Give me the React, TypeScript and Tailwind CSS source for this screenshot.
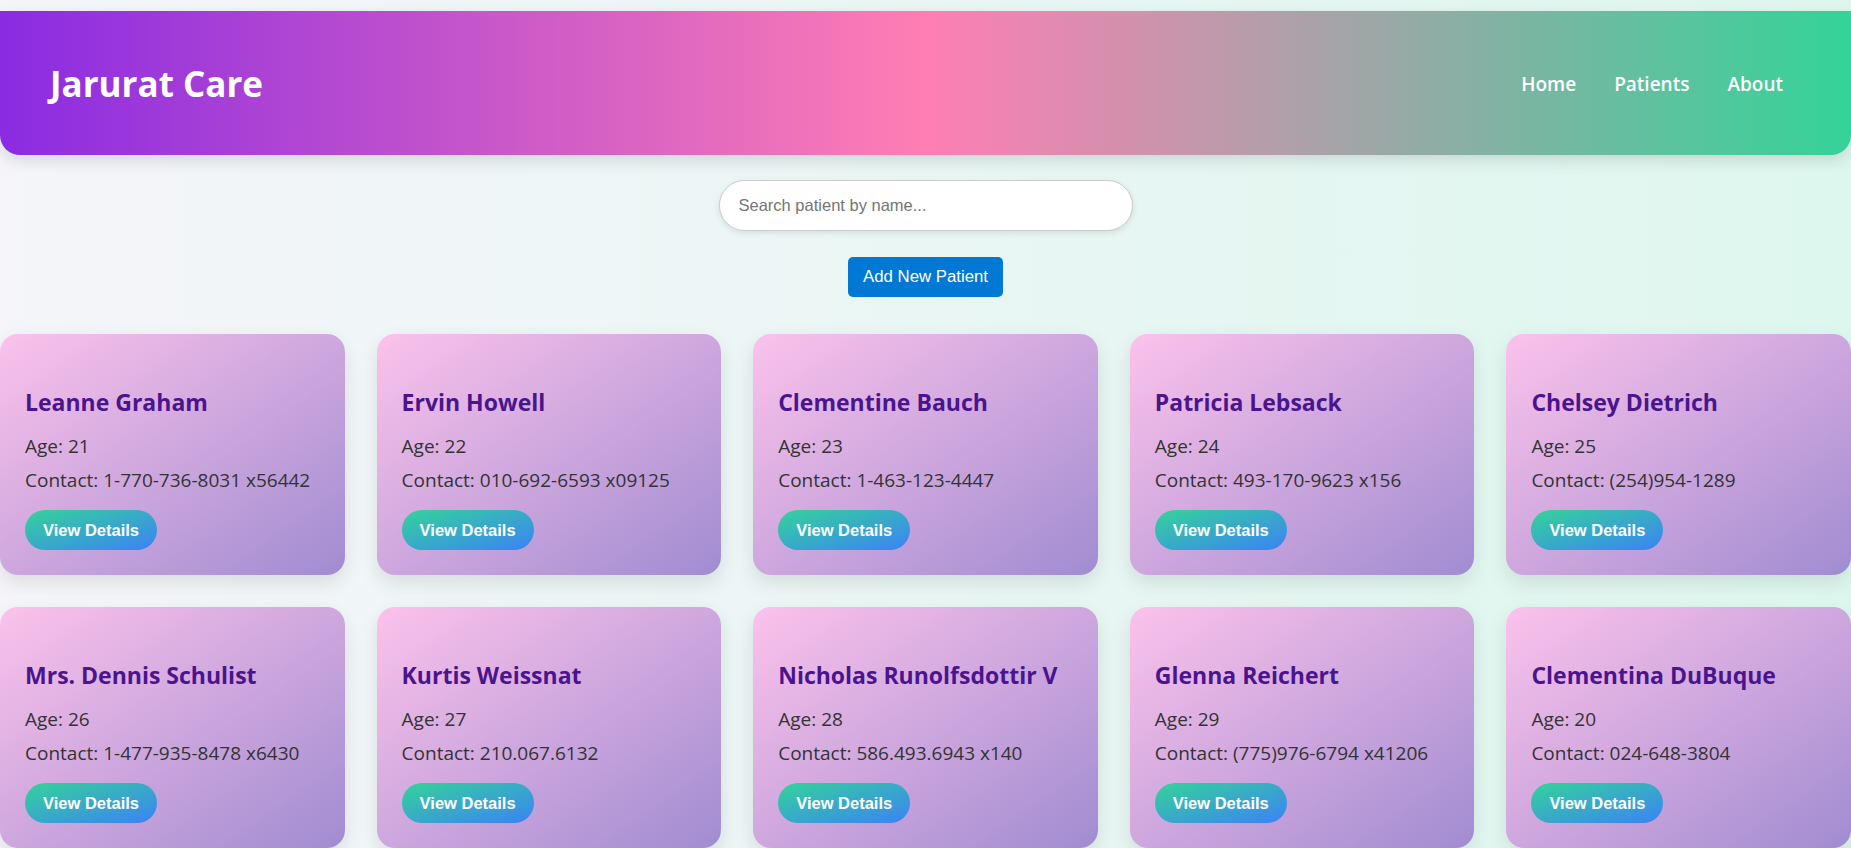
import React from 'react';

interface Patient {
  id: number;
  name: string;
  age: number;
  contact: string;
}

const patients: Patient[] = [
  { id: 1, name: 'Leanne Graham', age: 21, contact: '1-770-736-8031 x56442' },
  { id: 2, name: 'Ervin Howell', age: 22, contact: '010-692-6593 x09125' },
  { id: 3, name: 'Clementine Bauch', age: 23, contact: '1-463-123-4447' },
  { id: 4, name: 'Patricia Lebsack', age: 24, contact: '493-170-9623 x156' },
  { id: 5, name: 'Chelsey Dietrich', age: 25, contact: '(254)954-1289' },
  { id: 6, name: 'Mrs. Dennis Schulist', age: 26, contact: '1-477-935-8478 x6430' },
  { id: 7, name: 'Kurtis Weissnat', age: 27, contact: '210.067.6132' },
  { id: 8, name: 'Nicholas Runolfsdottir V', age: 28, contact: '586.493.6943 x140' },
  { id: 9, name: 'Glenna Reichert', age: 29, contact: '(775)976-6794 x41206' },
  { id: 10, name: 'Clementina DuBuque', age: 20, contact: '024-648-3804' },
];

const uiFont = "font-['Open_Sans',sans-serif]";
const arial = "font-['Liberation_Sans',Arial,sans-serif]";

const PatientCard: React.FC<{ patient: Patient }> = ({ patient }) => {
  return (
    <div className="rounded-[18px] bg-linear-to-br/srgb from-[#fbc2eb] to-[#a18cd1] p-[25px] shadow-[0_8px_20px_rgba(0,0,0,0.1)]">
      <h3 className={`${uiFont} mt-[27px] text-[23px] font-bold leading-[32px] text-[#4a148c]`}>
        {patient.name}
      </h3>
      <p className={`${uiFont} mt-[16px] text-[19px] leading-[24px] text-[#333]`}>Age: {patient.age}</p>
      <p className={`${uiFont} mt-[10px] text-[19px] leading-[24px] text-[#333]`}>Contact: {patient.contact}</p>
      <button
        className={`${arial} mt-[18px] h-[40px] rounded-full bg-linear-to-br/srgb from-[#34d399] to-[#3b82f6] px-[18px] text-[16.5px] font-bold text-white`}
      >
        View Details
      </button>
    </div>
  );
};

export default function App() {
  return (
    <div className="min-h-screen bg-linear-to-r/srgb from-[#f5f5fa] to-[#def7ee] pt-[11px]">
      <header className="flex h-[144px] items-center justify-between rounded-b-[20px] bg-linear-to-r/srgb from-[#8a2be2] via-[#ff7eb3] to-[#34d399] pl-[50px] pr-[68px] pt-[3px] shadow-[0_6px_16px_rgba(0,0,0,0.12)]">
        <h1 className={`${uiFont} text-[35px] font-bold text-white`}>Jarurat Care</h1>
        <nav className={`${uiFont} flex gap-[38px] text-[19px] font-semibold text-white`}>
          <a href="#">Home</a>
          <a href="#">Patients</a>
          <a href="#">About</a>
        </nav>
      </header>

      <div className="mt-[25px] flex flex-col items-center">
        <input
          type="text"
          placeholder="Search patient by name..."
          className={`${arial} h-[51px] w-[414px] rounded-full border border-[#ccc] bg-white px-[19px] text-[16.5px] text-[#333] shadow-[0_2px_6px_rgba(0,0,0,0.1)] outline-none placeholder:text-[#757575]`}
        />
        <button className={`${arial} mt-[26px] h-[40px] rounded-[5px] bg-[#0078d4] px-[15px] text-[16.8px] text-white`}>
          Add New Patient
        </button>
      </div>

      <div className="mt-[37px] grid grid-cols-5 gap-8 pb-8">
        {patients.map((p) => (
          <PatientCard key={p.id} patient={p} />
        ))}
      </div>
    </div>
  );
}
